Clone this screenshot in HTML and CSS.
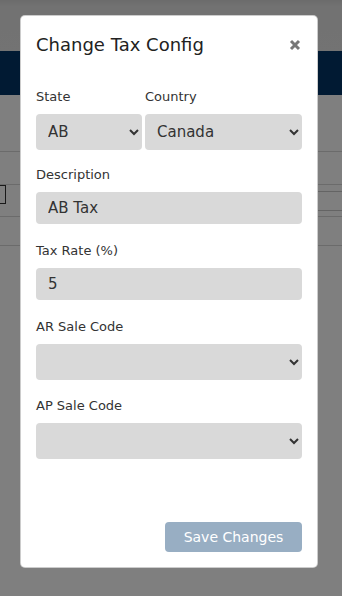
FILE: index.html
```html
<!DOCTYPE html>
<html lang="en">
<head>
    <meta charset="UTF-8">
    <meta name="viewport" content="width=device-width, initial-scale=1.0">
    <title>Change Tax Config</title>
    <link rel="stylesheet" href="styles.css">
</head>
<body>
    <div class="page">
        <div class="topbar"></div>
        <div class="navbar"></div>
        <div class="toolbar"></div>
        <div class="filters"></div>
        <div class="search-row">
            <div class="filter-box"></div>
            <div class="search-box"></div>
        </div>
        <div class="table-head"></div>
    </div>

    <div class="backdrop"></div>

    <div class="modal">
        <div class="modal-header">
            <h2>Change Tax Config</h2>
            <button class="close" type="button" aria-label="Close">
                <svg width="12" height="12" viewBox="0 0 12 12">
                    <path d="M2 2L10 10M10 2L2 10" stroke="#777" stroke-width="3" stroke-linecap="butt"/>
                </svg>
            </button>
        </div>

        <form class="modal-body">
            <div class="row">
                <div class="form-group state">
                    <label for="state">State</label>
                    <select id="state">
                        <option>AB</option>
                    </select>
                </div>
                <div class="form-group country">
                    <label for="country">Country</label>
                    <select id="country">
                        <option>Canada</option>
                    </select>
                </div>
            </div>

            <div class="form-group text-group">
                <label for="description">Description</label>
                <input type="text" id="description" value="AB Tax">
            </div>

            <div class="form-group text-group">
                <label for="rate">Tax Rate (%)</label>
                <input type="text" id="rate" value="5">
            </div>

            <div class="form-group select-group">
                <label for="ar">AR Sale Code</label>
                <select id="ar">
                    <option></option>
                </select>
            </div>

            <div class="form-group select-group">
                <label for="ap">AP Sale Code</label>
                <select id="ap">
                    <option></option>
                </select>
            </div>
        </form>

        <div class="modal-footer">
            <button class="save" type="button">Save Changes</button>
        </div>
    </div>
</body>
</html>
```

FILE: styles.css
```css
body {
    margin: 0;
    font-family: 'DejaVu Sans', 'Noto Sans', sans-serif;
    background: #fff;
    height: 596px;
    overflow: hidden;
}

.page {
    height: 596px;
}

.topbar {
    height: 51px;
    background: linear-gradient(#d8d8d8, #e4e4e4 6px, #e6e6e6);
}

.navbar {
    height: 44px;
    background: #023466;
}

.toolbar {
    height: 56px;
    border-bottom: 1px solid #d6d6d6;
}

.filters {
    height: 32px;
    border-bottom: 1px solid #d6d6d6;
}

.search-row {
    height: 31px;
    border-bottom: 1px solid #d6d6d6;
    display: flex;
    justify-content: space-between;
    align-items: flex-start;
}

.filter-box {
    width: 5px;
    height: 17px;
    border: 1px solid #333;
    border-left: none;
}

.search-box {
    width: 30px;
    height: 18px;
    margin-top: 6px;
    border-top: 1px solid #c8c8c8;
    border-bottom: 1px solid #c8c8c8;
}

.table-head {
    height: 28px;
    border-bottom: 1px solid #d6d6d6;
}

.backdrop {
    position: absolute;
    inset: 0;
    background: rgba(0, 0, 0, 0.5);
}

.modal {
    position: absolute;
    left: 20px;
    top: 15px;
    width: 298px;
    height: 553px;
    box-sizing: border-box;
    background: #fff;
    border: 1px solid rgba(0, 0, 0, 0.2);
    border-radius: 5px;
    padding: 15px;
    display: flex;
    flex-direction: column;
}

.modal-header {
    display: flex;
    justify-content: space-between;
    align-items: center;
    height: 27px;
    margin-bottom: 29px;
}

.modal-header h2 {
    margin: 0;
    font-size: 18px;
    font-weight: 500;
    color: #222;
}

.close {
    border: none;
    background: none;
    padding: 0;
    margin-right: 1px;
    line-height: 0;
    cursor: pointer;
}

.row {
    display: flex;
    gap: 3px;
}

.state {
    width: 106px;
}

.country {
    flex: 1;
}

.form-group {
    display: flex;
    flex-direction: column;
    margin-bottom: 15px;
}

.text-group {
    margin-bottom: 17px;
}

.select-group {
    margin-bottom: 16px;
}

label {
    font-size: 13px;
    line-height: 20px;
    color: #333;
    margin-bottom: 7px;
}

select,
input {
    font-family: inherit;
    font-size: 15px;
    color: #333;
    background-color: #d9d9d9;
    border: none;
    border-radius: 4px;
    outline: none;
}

select {
    height: 36px;
    padding: 0 4px 0 8px;
}

input {
    height: 32px;
    padding: 0 12px;
    box-sizing: border-box;
}

.modal-footer {
    margin-top: auto;
    display: flex;
    justify-content: flex-end;
}

.save {
    width: 137px;
    height: 30px;
    background: #98aec3;
    color: #fff;
    border: none;
    border-radius: 4px;
    font-family: inherit;
    font-size: 14px;
    cursor: pointer;
}
```
